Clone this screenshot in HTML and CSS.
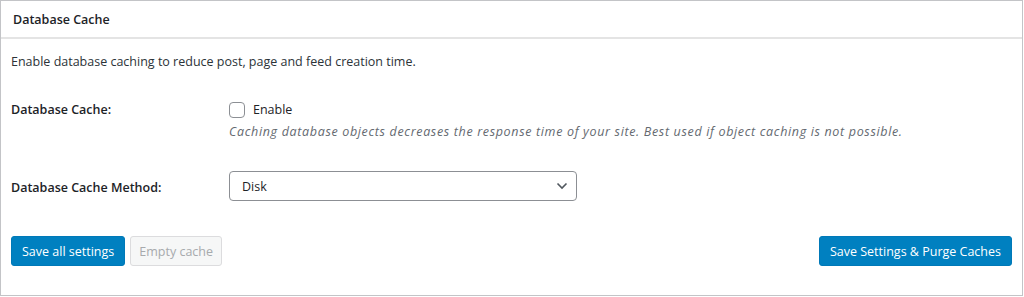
FILE: index.html
```html
<!DOCTYPE html>
<html lang="en">
    <head>
        <meta charset="utf-8">
        <title>Database Cache</title>
        <link rel="stylesheet" href="styles.css">
    </head>
    <body>
        <div class="postbox">
            <h3 class="hndle">Database Cache</h3>
            <div class="inside">
                <p class="intro">Enable database caching to reduce post, page and feed creation time.</p>
                <div class="form-table">
                    <div class="row row-check">
                        <div class="th">Database Cache:</div>
                        <div class="td">
                            <label class="check"><span class="box"></span>Enable</label>
                            <p class="description">Caching database objects decreases the response time of your site. Best used if object caching is not possible.</p>
                        </div>
                    </div>
                    <div class="row row-select">
                        <div class="th">Database Cache Method:</div>
                        <div class="td">
                            <div class="select">
                                <span>Disk</span>
                                <svg width="12" height="8" viewBox="0 0 12 8"><path d="M1.5 1.5 L6 6 L10.5 1.5" fill="none" stroke="#50575e" stroke-width="1.6"/></svg>
                            </div>
                        </div>
                    </div>
                </div>
                <div class="actions">
                    <button class="button primary">Save all settings</button>
                    <button class="button disabled">Empty cache</button>
                    <button class="button primary purge">Save Settings &amp; Purge Caches</button>
                </div>
            </div>
        </div>
    </body>
</html>
```

FILE: styles.css
```css
html, body, div, p, h3, button, label, span {
    margin: 0;
    padding: 0;
}
body {
    font-family: "Open Sans", sans-serif;
    font-size: 12.5px;
    color: #1d2327;
    background: #fff;
}
.postbox {
    width: 1021px;
    height: 294px;
    border: 1px solid #c3c4c7;
    display: flex;
    flex-direction: column;
}
.hndle {
    font-size: 12.5px;
    font-weight: 600;
    padding: 0 12px;
    height: 36px;
    line-height: 38px;
    border-bottom: 2px solid #e4e4e4;
}
.inside {
    padding: 0 10px;
    flex: 1;
    display: flex;
    flex-direction: column;
}
.intro {
    margin-top: 14px;
    line-height: 18px;
    color: #2c3338;
}
.row {
    display: grid;
    grid-template-columns: 218px 1fr;
}
.th {
    font-weight: 600;
}
.row-check {
    margin-top: 29px;
}
.row-check .th {
    line-height: 20px;
}
.check {
    display: flex;
    align-items: center;
    gap: 8px;
    line-height: 20px;
}
.box {
    width: 14px;
    height: 14px;
    border: 1px solid #8c8f94;
    border-radius: 4px;
}
.description {
    font-style: italic;
    color: #646970;
    margin-top: 3px;
    line-height: 18px;
    letter-spacing: 0.66px;
}
.row-select {
    margin-top: 30px;
    align-items: center;
}
.row-select .th {
    padding-top: 2px;
}
.select {
    border: 1px solid #8c8f94;
    border-radius: 4px;
    display: flex;
    align-items: center;
    justify-content: space-between;
    padding: 0 8px 0 12px;
    box-sizing: border-box;
    width: 348px;
    height: 30px;
}
.actions {
    margin-top: 35px;
    display: flex;
    gap: 5px;
}
.button {
    font-family: inherit;
    font-size: 12.5px;
    height: 30px;
    padding: 0 10px;
    border-radius: 3px;
    border: 1px solid;
    cursor: pointer;
}
.primary {
    background: #0080c0;
    border-color: #0079b8;
    color: #fff;
}
.disabled {
    padding: 0 8px;
    background: #f6f7f7;
    border-color: #dcdcde;
    color: #a7aaad;
}
.purge {
    margin-left: auto;
}
```
